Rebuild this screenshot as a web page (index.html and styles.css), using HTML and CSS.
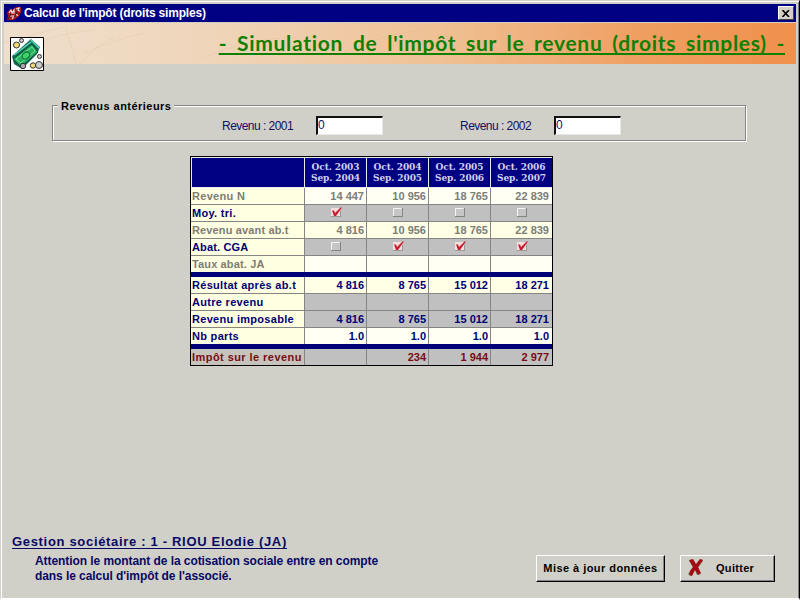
FILE: index.html
```html
<!DOCTYPE html>
<html lang="fr">
<head>
<meta charset="utf-8">
<title>Calcul de l'impôt (droits simples)</title>
<link rel="stylesheet" href="styles.css">
</head>
<body>
<svg width="0" height="0" class="defs">
  <symbol id="box" viewBox="0 0 14 12">
    <path d="M2 1h9v9H2z" fill="#c6c6c6"/>
    <path d="M2.500 9.500v-8h8" fill="none" stroke="#f4f4f4"/>
    <path d="M2 9.500h9.500M11.500 1v9" fill="none" stroke="#858585"/>
  </symbol>
  <symbol id="tick" viewBox="0 0 14 12">
    <path d="M2 1h9v9H2z" fill="#f3dede"/>
    <path d="M2 9.500h9.500M11.500 4v6" fill="none" stroke="#999"/>
    <path d="M3 3.500h2l1 2.500L11.500 .500h1.500L7 9H5z" fill="#c81c30"/>
  </symbol>
</svg>
<div class="window">
  <header class="titlebar">
    <svg class="app" width="16" height="15" viewBox="0 0 16 15">
      <path d="M1 7l3-4 2 1 4-3 5 0v5l-2 4-5 4H1l1-4z" fill="#a81820"/>
      <path d="M3 7l2-3 1 3 2-3v4M10 3l3-1-1 3 2 0M4 10h4l-2 3M10 8l2 2" fill="none" stroke="#f0dcdc" stroke-width="1.200"/>
      <path d="M2 13l3-5M8 11l4-6" stroke="#222"/>
    </svg>
    <span class="caption">Calcul de l'impôt (droits simples)</span>
    <span class="close"><svg width="8" height="7" viewBox="0 0 8 7"><path d="M.5 0L7 7M7 0L.5 7" stroke="#000" stroke-width="1.600"/></svg></span>
  </header>
  <div class="banner">
    <svg class="money" width="34" height="34" viewBox="0 0 34 34">
      <path d="M.5.5h33v33H.5z" fill="#fff" stroke="#000"/>
      <path d="M2 19L21 2l9 8-3 7L12 32 4 27z" fill="#146a58"/>
      <path d="M21 3l8 8M4 18l17-13" stroke="#58d8b8" stroke-width="1.500"/>
      <path d="M3 22L22 7l6 8-17 15z" fill="#28b060" stroke="#0b4434"/>
      <path d="M6 22l16-12 3 4-14 12z" fill="none" stroke="#72e094"/>
      <ellipse cx="16" cy="18.500" rx="4" ry="3" fill="#44d068" stroke="#087038" transform="rotate(-38 16 18.500)"/>
      <g stroke="#333"><circle cx="6.500" cy="8" r="3" fill="#f0dc78"/><circle cx="11.500" cy="3.500" r="2" fill="#ccc"/><circle cx="29.500" cy="19.500" r="2" fill="#ccc"/><circle cx="13" cy="29" r="2.700" fill="#aaa"/><circle cx="23" cy="28.500" r="2.700" fill="#f0dc78"/><circle cx="29" cy="28" r="3.500" fill="#ccc"/></g>
    </svg>
    <svg class="grain" width="792" height="41" viewBox="0 0 792 41">
      <path d="M0 20q30-9 60-16M15 30Q45 10 90 7M62 5l10 36M76 41Q95 20 110 15M80 30q35-15 60-20M200 34q45-18 90-20M340 30q40-20 80-23M500 36q45-22 90-26M620 35q45-24 100-26" fill="none" stroke="#c99c70" stroke-opacity=".13"/>
    </svg>
    <h1>- Simulation de l'impôt sur le revenu (droits simples) -</h1>
  </div>
  <main>
    <section class="group">
      <h2>Revenus antérieurs</h2>
      <label><span>Revenu : 2001</span><input value="0"></label>
      <label><span>Revenu : 2002</span><input value="0"></label>
    </section>
    <div class="table">
      <div class="row head"><b></b><b>Oct. 2003<br>Sep. 2004</b><b>Oct. 2004<br>Sep. 2005</b><b>Oct. 2005<br>Sep. 2006</b><b>Oct. 2006<br>Sep. 2007</b></div>
      <div class="row dim"><b>Revenu N</b><i>14 447</i><i>10 956</i><i>18 765</i><i>22 839</i></div>
      <div class="row gray checks"><b>Moy. tri.</b><i><svg><use href="#tick"/></svg></i><i><svg><use href="#box"/></svg></i><i><svg><use href="#box"/></svg></i><i><svg><use href="#box"/></svg></i></div>
      <div class="row dim cream tight"><b>Revenu avant ab.t</b><i>4 816</i><i>10 956</i><i>18 765</i><i>22 839</i></div>
      <div class="row gray checks tight"><b>Abat. CGA</b><i><svg><use href="#box"/></svg></i><i><svg><use href="#tick"/></svg></i><i><svg><use href="#tick"/></svg></i><i><svg><use href="#tick"/></svg></i></div>
      <div class="row dim last tight"><b>Taux abat. JA</b><i></i><i></i><i></i><i></i></div>
      <div class="bar"></div>
      <div class="row cream"><b>Résultat après ab.t</b><i>4 816</i><i>8 765</i><i>15 012</i><i>18 271</i></div>
      <div class="row gray"><b>Autre revenu</b><i></i><i></i><i></i><i></i></div>
      <div class="row gray"><b>Revenu imposable</b><i>4 816</i><i>8 765</i><i>15 012</i><i>18 271</i></div>
      <div class="row last"><b>Nb parts</b><i>1.0</i><i>1.0</i><i>1.0</i><i>1.0</i></div>
      <div class="bar"></div>
      <div class="row gray total last"><b>Impôt sur le revenu</b><i></i><i>234</i><i>1 944</i><i>2 977</i></div>
    </div>
  </main>
  <footer>
    <div class="note">
      <h3>Gestion sociétaire : 1 - RIOU Elodie (JA)</h3>
      <p>Attention le montant de la cotisation sociale entre en compte<br>dans le calcul d'impôt de l'associé.</p>
    </div>
    <button class="update">Mise à jour données</button>
    <button class="quit"><svg width="16" height="19" viewBox="0 0 16 19"><path d="M4 2l4 5 5-6 2 2-5 7 3 6-4 1-2-5-4 6-3-2 5-7-4-6z" fill="#778a76"/><path d="M1 2l4-1 3 5 4-5 3 1-5 7 3 6-3 2-3-5-3 6-3-1 1-4 3-4z" fill="#a20c12"/></svg><span>Quitter</span></button>
  </footer>
</div>
</body>
</html>
```
FILE: styles.css
```css
* { box-sizing: border-box; }
body { margin: 0; font: bold 11px/13px "Liberation Sans", sans-serif; background: #d1d0c8; overflow: hidden; }
.defs { position: absolute; }
.window { width: 800px; height: 600px; padding: 3px 2px 0 2px; border: 1px solid #d4d0c8; border-right-color: #000; border-bottom: 2px solid #fff; box-shadow: inset 1px 1px #fff, inset -1px 0 #808080; display: flex; flex-direction: column; }
.titlebar { height: 18px; margin: 0 1px; background: #000082; color: #fff; display: flex; align-items: center; padding: 0 2px 0 2px; flex: none; }
.caption { margin-left: 2px; font-size: 12px; letter-spacing: -.19px; flex: 1; white-space: nowrap; }
.close { width: 16px; height: 14px; background: #d4d0c8; border: 1px solid; border-color: #fff #404040 #404040 #fff; display: flex; align-items: center; justify-content: center; }
.banner { height: 41px; margin: 1px 1px 0; flex: none; display: flex; position: relative; background: linear-gradient(90deg, #efdecc 0, #efd6bb 25%, #efc194 55%, #ef9f62 80%, #f0904b 100%); }
.money { position: relative; z-index: 1; margin: 14px 0 0 6px; flex: none; }
.grain { position: absolute; left: 0; top: 0; }
h1 { position: relative; margin: 7px 11px 0 auto; color: #108004; font: bold 21px/25px "Comic Sans MS", Lato, sans-serif; letter-spacing: .7px; word-spacing: 4px; white-space: nowrap; text-decoration: underline; text-decoration-thickness: 2px; text-underline-offset: 2px; text-decoration-skip-ink: none; }
main { height: 464px; padding: 41px 0 0 49px; flex: none; }
.group { width: 694px; height: 36px; border: 1px solid #858585; box-shadow: 1px 1px #fff, inset 1px 1px #fff; position: relative; display: flex; align-items: flex-start; padding: 10px 0 0 169px; }
h2 { position: absolute; left: 5px; top: -7px; margin: 0; padding: 0 3px; background: #d1d0c8; font-size: 11px; line-height: 14px; letter-spacing: .46px; white-space: nowrap; }
label { display: flex; font-weight: normal; font-size: 12px; color: #101064; width: 238px; }
label span { width: 94px; padding-top: 4px; letter-spacing: -.54px; white-space: nowrap; }
input { width: 67px; height: 19px; background: #fff; border: 2px solid; border-color: #111 #e8e8e8 #e8e8e8 #111; border-bottom-width: 1px; border-right-width: 1px; outline: 0; padding: 0 0 2px; font: 12px/14px "Liberation Sans", sans-serif; color: #101074; }
.table { width: 363px; margin: 15px 0 0 138px; border: 1px solid #000; color: #000074; }
.row { display: grid; grid-template-columns: 114px 62px 62px 62px 61px; height: 17px; font-size: 11px; line-height: 16px; }
.row > * { border-right: 1px solid #858585; border-bottom: 1px solid #858585; white-space: nowrap; font-style: normal; }
.row > :last-child { border-right: 0; }
.row > b { background: #ffffe1; padding-left: 1px; letter-spacing: .3px; }
.row.tight > b { letter-spacing: .14px; }
.row > i { background: #fffff4; text-align: right; padding-right: 2px; }
.row > i:last-child { padding-right: 3px; }
.row.cream > i { background: #ffffe6; }
.row.gray > i { background: #c0c0c0; }
.row.dim { color: #7d7d76; }
.row.last { height: 16px; }
.row.last > * { border-bottom: 0; }
.row.total { color: #780c14; }
.row.total > b { background: #c6c3bd; letter-spacing: .44px; }
.row.head { height: 31px; }
.row.head > b { background: #000082; color: #d0d0ec; border-color: #e8e8f0; border-top: 1px solid #e8e8f0; text-align: center; font: bold 9px/11px "DejaVu Serif", serif; letter-spacing: -.1px; padding: 4px 0 0; }
.row.head > b:first-child { border-left: 1px solid #e8e8f0; }
.bar { height: 5px; background: #000078; }
.row.checks > i { padding: 2px 24px 0; line-height: 0; }
.checks svg { width: 14px; height: 12px; display: block; }
footer { display: flex; flex: 1; padding-left: 9px; }
.note { width: 524px; flex: none; padding-top: 6px; color: #080864; white-space: nowrap; }
h3 { margin: 0; font-size: 13px; line-height: 15px; letter-spacing: .68px; text-decoration: underline; text-decoration-skip-ink: none; text-underline-offset: 2px; }
p { margin: 5px 0 0 23px; font-size: 12px; line-height: 15px; letter-spacing: -.07px; }
button { height: 27px; margin: 27px 15px 0 0; padding: 0 0 2px; background: #d1d0c8; border: 1px solid; border-color: #fff #000 #000 #fff; box-shadow: inset -1px -1px #858585; font: bold 11px "Liberation Sans", sans-serif; color: #000; display: flex; align-items: center; white-space: nowrap; flex: none; }
.update { width: 129px; justify-content: center; letter-spacing: .45px; }
.quit { width: 95px; padding-left: 7px; letter-spacing: .3px; }
.quit span { margin-left: 12px; }
```
